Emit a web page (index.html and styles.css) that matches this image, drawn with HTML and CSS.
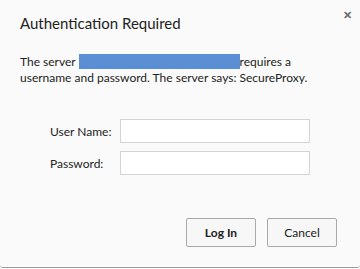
FILE: index.html
```html
<!DOCTYPE html>
<html lang="en">
<head>
  <meta charset="UTF-8">
  <title>Authentication Required</title>
  <link rel="stylesheet" href="styles.css">
</head>
<body>
  <div class="dialog">
    <div class="header">
      <h1>Authentication Required</h1>
      <span class="close">&#x2715;</span>
    </div>

    <p class="message">
      The server <span class="host"></span>requires a
      username and password. The server says: SecureProxy.
    </p>

    <form class="fields">
      <label for="user">User Name:</label>
      <input id="user" type="text">
      <label for="pass">Password:</label>
      <input id="pass" type="password">
    </form>

    <div class="buttons">
      <button class="btn btn-login">Log In</button>
      <button class="btn">Cancel</button>
    </div>
  </div>
</body>
</html>
```

FILE: styles.css
```css
body {
  margin: 0;
  background-color: #ffffff;
  font-family: Lato, 'Noto Sans', sans-serif;
  color: #222;
}

.dialog {
  height: 267px;
  background-color: #fafafa;
  border-bottom: 1px solid #9a9a9a;
  border-radius: 0 0 3px 3px;
}

.header {
  display: flex;
  justify-content: space-between;
  align-items: flex-start;
  padding: 13px 8px 0 20px;
}

h1 {
  margin: 0;
  font-size: 15px;
  font-weight: normal;
  line-height: 20px;
}

.close {
  font-size: 11px;
  font-weight: bold;
  color: #6a6a6a;
  line-height: 12px;
  margin-top: -4px;
}

.message {
  margin: 21px 20px 0 20px;
  font-size: 12px;
  line-height: 16px;
}

.host {
  display: inline-block;
  width: 161px;
  height: 15px;
  background-color: #5a8fd6;
  vertical-align: -3px;
}

.fields {
  display: grid;
  grid-template-columns: 70px 190px;
  row-gap: 8px;
  margin: 33px 0 0 50px;
  align-items: center;
  font-size: 12px;
}

.fields input {
  box-sizing: border-box;
  height: 24px;
  border: 1px solid #d4d4d4;
  background-color: #fff;
  margin: 0;
}

.buttons {
  display: flex;
  justify-content: flex-end;
  gap: 11px;
  margin: 43px 23px 0 0;
}

.btn {
  width: 70px;
  height: 29px;
  font-family: Lato, 'Noto Sans', sans-serif;
  font-size: 12px;
  color: #222;
  background-color: #f7f7f7;
  border: 1px solid #a8a8a8;
  border-radius: 2px;
}

.btn-login {
  font-weight: bold;
}
```
